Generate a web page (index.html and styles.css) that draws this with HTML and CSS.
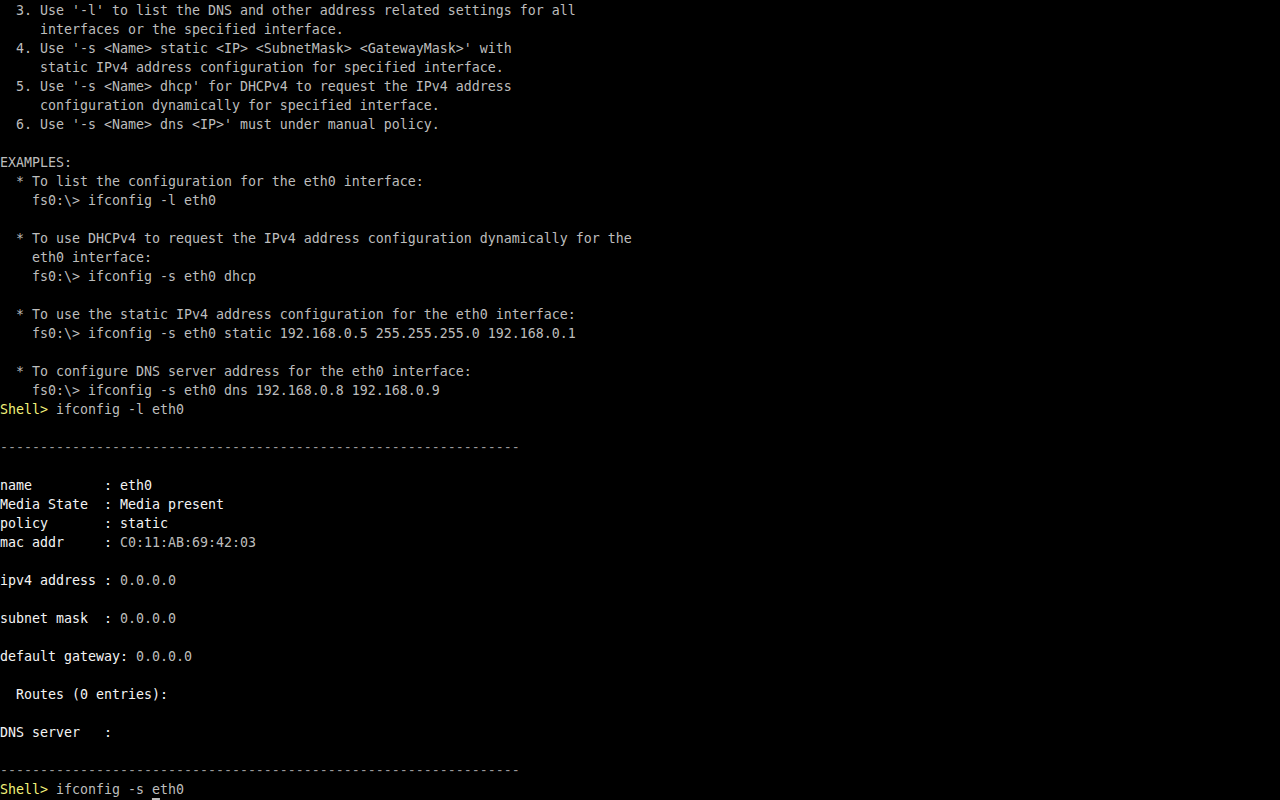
FILE: index.html
```html
<!DOCTYPE html>
<html lang="en">
    <head>
        <meta charset="UTF-8">
        <title>UEFI Shell - ifconfig</title>
        <link rel="stylesheet" href="styles.css">
    </head>
    <body>
        <div class="screen">
<pre class="console">  3. Use '-l' to list the DNS and other address related settings for all
     interfaces or the specified interface.
  4. Use '-s &lt;Name&gt; static &lt;IP&gt; &lt;SubnetMask&gt; &lt;GatewayMask&gt;' with
     static IPv4 address configuration for specified interface.
  5. Use '-s &lt;Name&gt; dhcp' for DHCPv4 to request the IPv4 address
     configuration dynamically for specified interface.
  6. Use '-s &lt;Name&gt; dns &lt;IP&gt;' must under manual policy.

EXAMPLES:
  * To list the configuration for the eth0 interface:
    fs0:\&gt; ifconfig -l eth0

  * To use DHCPv4 to request the IPv4 address configuration dynamically for the
    eth0 interface:
    fs0:\&gt; ifconfig -s eth0 dhcp

  * To use the static IPv4 address configuration for the eth0 interface:
    fs0:\&gt; ifconfig -s eth0 static 192.168.0.5 255.255.255.0 192.168.0.1

  * To configure DNS server address for the eth0 interface:
    fs0:\&gt; ifconfig -s eth0 dns 192.168.0.8 192.168.0.9
<span class="prompt">Shell&gt;</span> ifconfig -l eth0

<span class="rule">-----------------------------------------------------------------</span>

<span class="hi">name         : eth0</span>
<span class="hi">Media State  : Media present</span>
<span class="hi">policy       : static</span>
<span class="hi">mac addr     : </span>C0:11:AB:69:42:03

<span class="hi">ipv4 address : </span>0.0.0.0

<span class="hi">subnet mask  : </span>0.0.0.0

<span class="hi">default gateway: </span>0.0.0.0

<span class="hi">  Routes (0 entries):</span>

<span class="hi">DNS server   :</span>

<span class="rule">-----------------------------------------------------------------</span>
<span class="prompt">Shell&gt;</span> ifconfig -s <span class="cursor">e</span>th0</pre>
        </div>
    </body>
</html>
```

FILE: styles.css
```css
* {
    margin: 0;
    padding: 0;
    box-sizing: border-box;
}

html, body {
    background-color: #000000;
}

.screen {
    width: 1280px;
    height: 800px;
    overflow: hidden;
    padding-top: 1px;
}

.console {
    font-family: "DejaVu Sans Mono", "Liberation Mono", monospace;
    font-size: 13.29px;
    line-height: 19px;
    color: #bdbdbd;
    white-space: pre;
}

.prompt {
    color: #f2f27a;
}

.hi {
    color: #f4f4f4;
}

.rule {
    color: #9a9a9a;
}

/* blinking cursor sits under the character */
.cursor {
    text-decoration: underline;
    text-decoration-thickness: 2px;
    text-underline-offset: 4px;
}
```
